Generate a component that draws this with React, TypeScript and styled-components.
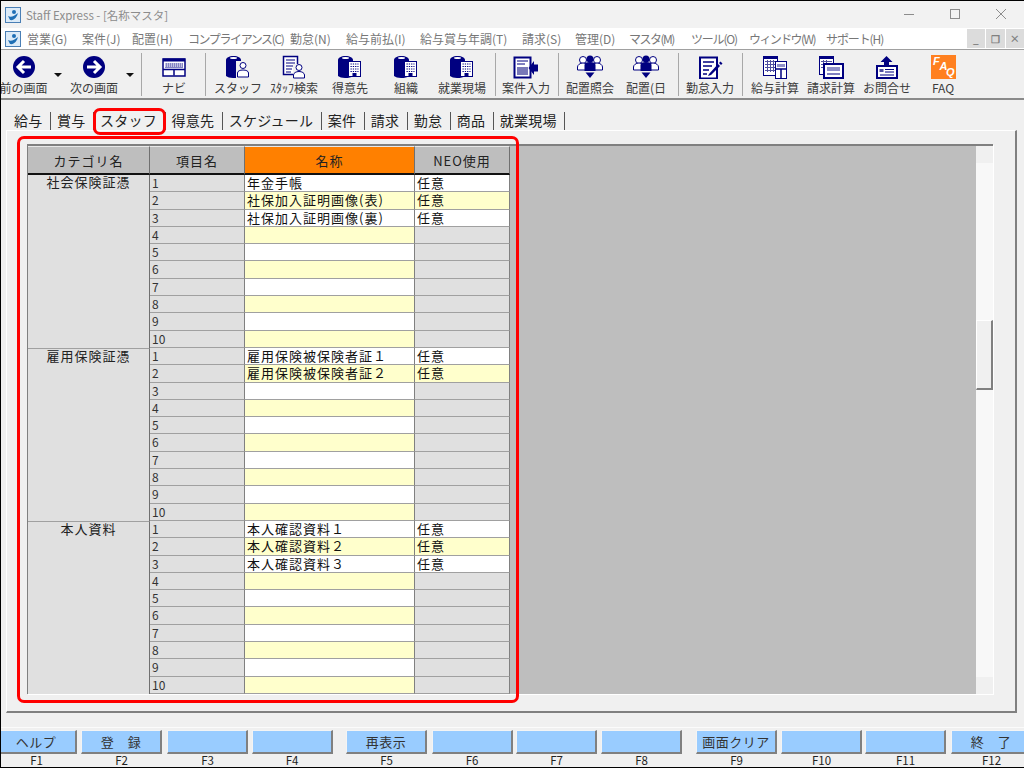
import React from "react";
import styled, { createGlobalStyle } from "styled-components";

const navy = "#000080";
const gothic = `"Noto Sans CJK JP", "Liberation Sans", sans-serif`;

const GlobalStyle = createGlobalStyle`
  html, body {
    margin: 0;
    padding: 0;
    background: #f0f0f0;
  }
  body {
    font-family: ${gothic};
    overflow: hidden;
  }
`;

const Binder = () => (
  <>
    <path d="M1 7c0-2 3-4 7.500-4S16 5 16 7v16c-2 1.500-4 2-8 2-3 0-5.500-.8-7-2z" fill={navy} />
    <ellipse cx="8.500" cy="5" rx="3.500" ry="1" fill="#fff" />
  </>
);

const PersonBadge = () => (
  <>
    <rect x="11" y="8" width="13" height="17" fill="#f0f0f0" />
    <circle cx="18" cy="12.500" r="3" fill="#fff" stroke={navy} />
    <path d="M12.500 24v-4c0-2 2.500-3 5.500-3s5.500 1 5.500 3v4z" fill="#fff" stroke={navy} />
  </>
);

const BuildingBadge = () => (
  <>
    <rect x="11.500" y="8.500" width="12" height="15" fill="#fff" stroke={navy} />
    <path d="M13.500 11h8M13.500 13.500h8M13.500 16h8M13.500 18.500h8" stroke={navy} strokeDasharray="1.300 1" />
    <rect x="15.500" y="20" width="4" height="3.500" fill={navy} />
  </>
);

const Crowd = () => (
  <>
    <circle cx="6" cy="7" r="3.500" fill="#fff" stroke={navy} />
    <circle cx="20" cy="7" r="3.500" fill="#fff" stroke={navy} />
    <path d="M.5 17v-3c0-2 2.500-4 5.500-4s5.500 2 5.500 4v3zM14.500 17v-3c0-2 2.500-4 5.500-4s5.500 2 5.500 4v3z" fill="#fff" stroke={navy} />
    <circle cx="13" cy="6" r="3.500" fill={navy} />
    <path d="M7.500 18v-6c0-2 2-3 5.500-3s5.500 1 5.500 3v6z" fill={navy} />
    <path d="M8.500 19.500h9L13 25z" fill={navy} />
  </>
);

const icons: Record<string, React.ReactNode> = {
  back: (
    <>
      <circle cx="13" cy="14" r="11" fill={navy} />
      <path d="M20 14H8M13 8l-6 6 6 6" fill="none" stroke="#fff" strokeWidth="3" />
    </>
  ),
  next: (
    <>
      <circle cx="13" cy="14" r="11" fill={navy} />
      <path d="M6 14h12M13 8l6 6-6 6" fill="none" stroke="#fff" strokeWidth="3" />
    </>
  ),
  navi: (
    <>
      <rect x="2" y="6" width="22" height="17" fill="#fff" stroke={navy} strokeWidth="1.500" />
      <rect x="2" y="5.500" width="22" height="3" fill={navy} />
      <rect x="4" y="10" width="18" height="5" fill="#8484c4" />
      <path d="M4 11h18M4 13h18" stroke="#fff" strokeDasharray="1 1" />
      <path d="M2 16.500h22M13 16.500v6" stroke={navy} strokeWidth="1.500" />
    </>
  ),
  staff: (
    <>
      <Binder />
      <PersonBadge />
    </>
  ),
  search: (
    <>
      <rect x="2.500" y="3.500" width="14" height="18" fill="#fff" stroke={navy} strokeWidth="1.500" />
      <path d="M5 7h9M5 10h9M5 13h9M5 16h6M5 19h5" stroke={navy} />
      <rect x="12" y="11" width="13" height="14" fill="#f0f0f0" />
      <circle cx="18" cy="14.500" r="3" fill="#fff" stroke={navy} />
      <path d="M12.500 25v-3c0-2 2.500-3.500 5.500-3.500s5.500 1.500 5.500 3.500v3z" fill="#fff" stroke={navy} />
    </>
  ),
  client: (
    <>
      <Binder />
      <BuildingBadge />
    </>
  ),
  entry: (
    <>
      <rect x="1.500" y="4.500" width="16" height="20" fill="#fff" stroke={navy} strokeWidth="2" />
      <path d="M4 8h11M4 11h8" stroke={navy} />
      <rect x="4" y="14" width="11" height="8" fill="#7878b8" />
      <path d="M25 11.500v7h-4v3.500l-5.500-7 5.500-7v3.500z" fill={navy} />
    </>
  ),
  place: <Crowd />,
  attend: (
    <>
      <path d="M3 4.500h17v21H3z" fill="#fff" stroke={navy} strokeWidth="2" />
      <path d="M6 9h11M6 13h9M6 17h6M6 21h4" stroke={navy} strokeWidth="1.500" />
      <path d="M12 21l9-10 2 2-9 9-3 1zM22 10l1.500-1.500 2 2L24 12z" fill={navy} />
    </>
  ),
  salary: (
    <>
      <rect x="1.500" y="3.500" width="14" height="19" fill="#fff" stroke={navy} />
      <rect x="1" y="3" width="15" height="3" fill={navy} />
      <path d="M3 8.500h11M3 11.500h11M3 14.500h11M3 17.500h11M5.500 7v12M8.500 7v12M11.500 7v12" stroke="#5050a0" />
      <rect x="13.500" y="8.500" width="11" height="17" fill="#fff" stroke={navy} />
      <rect x="15" y="11" width="8" height="3" fill="#8f8fc8" />
      <path d="M13 16h12M19 16v9" stroke={navy} strokeWidth="1.500" />
    </>
  ),
  invoice: (
    <>
      <rect x="1.500" y="3.500" width="14" height="18" fill="#fff" stroke={navy} />
      <rect x="1" y="3" width="15" height="3" fill={navy} />
      <path d="M3 8.500h11M3 11.500h11M3 14.500h11M5.500 7v10M8.500 7v10" stroke="#5050a0" />
      <rect x="6" y="11" width="19" height="14" fill="#fff" stroke={navy} strokeWidth="2" />
      <rect x="9" y="14" width="13" height="4" fill="#8f8fc8" />
      <path d="M9 21h13" stroke={navy} />
    </>
  ),
  contact: (
    <>
      <path d="M12.500 3l6 6h-3.500v3h-5V9H6.500z" fill={navy} />
      <rect x="3" y="13" width="20" height="12" fill="#fff" stroke={navy} strokeWidth="2" />
      <rect x="5.500" y="16" width="4" height="3" fill="#5050a0" />
      <path d="M11 16.500h9M11 19h9M6 22h14" stroke={navy} />
    </>
  ),
};

const Root = styled.div`
  position: relative;
  width: 1024px;
  height: 768px;
  overflow: hidden;
  box-sizing: border-box;
  border-top: 1px solid #000;
  border-left: 1px solid #000;
  border-bottom: 1px solid #000;
  background: #f0f0f0;
  display: flex;
  flex-direction: column;
`;

const TitleBar = styled.div`
  height: 27px;
  display: flex;
  align-items: center;
  background: #f2f2f2;
  flex-shrink: 0;
`;

const AppIcon = styled.svg<{ $inMenu?: boolean }>`
  width: 16px;
  height: 16px;
  margin-left: ${(p) => (p.$inMenu ? -1 : 4)}px;
  margin-right: ${(p) => (p.$inMenu ? 6 : 0)}px;
  flex-shrink: 0;
`;

const TitleText = styled.span`
  margin-left: 5px;
  font-size: 11.500px;
  color: #8c8c8c;
  flex: 1;
`;

const WindowButton = styled.svg`
  width: 46px;
  height: 14px;
  margin-bottom: 2px;
  fill: none;
  stroke: #8c8c8c;
  stroke-width: 1;
`;

const MenuBar = styled.div`
  height: 22px;
  box-sizing: border-box;
  display: flex;
  align-items: center;
  padding-left: 5px;
  background: #fff;
  border-bottom: 1px solid #a0a0a0;
  flex-shrink: 0;
`;

const MenuItem = styled.span<{ $width: number; $squeeze: number }>`
  width: ${(p) => p.$width}px;
  flex-shrink: 0;
  font-size: 12px;
  letter-spacing: ${(p) => p.$squeeze}px;
  color: #777;
  white-space: nowrap;
`;

const MdiButtons = styled.div`
  margin-left: auto;
  display: flex;
  gap: 1px;
`;

const MdiButton = styled.span`
  width: 18.500px;
  height: 19px;
  background: #dcdcdc;
  color: #808080;
  font-size: 10px;
  font-weight: 700;
  display: flex;
  align-items: center;
  justify-content: center;
`;

const Toolbar = styled.div`
  height: 48px;
  display: flex;
  background: #f0f0f0;
  border-bottom: 2px solid #8a8a8a;
  flex-shrink: 0;
`;

const ToolGroup = styled.div<{ $pad: number; $width: number; $last?: boolean }>`
  width: ${(p) => p.$width}px;
  box-sizing: border-box;
  padding-left: ${(p) => p.$pad}px;
  display: flex;
  margin: 3px 0 2px;
  border-right: ${(p) => (p.$last ? "none" : "1px solid #a8a8a8")};
  flex-shrink: 0;
`;

const Tool = styled.div<{ $width: number }>`
  width: ${(p) => p.$width}px;
  flex-shrink: 0;
  display: flex;
  flex-direction: column;
  align-items: center;
  white-space: nowrap;
`;

const ToolIcon = styled.svg`
  width: 26px;
  height: 26px;
  display: block;
  flex-shrink: 0;
`;

const ToolLabel = styled.span`
  margin-top: 2px;
  font-size: 12px;
  line-height: 14px;
  color: #3c3c3c;
`;

const Caret = styled.div`
  width: 0;
  height: 0;
  margin-top: 20px;
  border-left: 4px solid transparent;
  border-right: 4px solid transparent;
  border-top: 4px solid #111;
`;

const CaretSlot = styled.div<{ $width: number }>`
  width: ${(p) => p.$width}px;
  display: flex;
  justify-content: center;
  flex-shrink: 0;
`;

const FaqBadge = styled.svg`
  width: 25px;
  height: 24px;
  display: block;
  margin-top: 2px;
`;

const TabRow = styled.div`
  height: 22px;
  margin-top: 8px;
  padding-left: 7px;
  display: flex;
  flex-shrink: 0;
`;

const Tab = styled.div`
  padding: 0 7.500px 0 6px;
  border-right: 1px solid #555;
  margin-top: 4px;
  font-size: 14px;
  line-height: 17px;
  letter-spacing: 0.25px;
  color: #222;
  white-space: nowrap;
`;

const Panel = styled.div`
  width: 1011px;
  height: 583px;
  margin-left: 5px;
  box-sizing: border-box;
  padding: 13px 22px 17px 20px;
  background: #f0f0f0;
  border-top: 1px solid #fff;
  border-left: 1px solid #fff;
  border-right: 2px solid #808080;
  border-bottom: 2px solid #808080;
  flex-shrink: 0;
  display: flex;
`;

const GridArea = styled.div`
  flex: 1;
  display: flex;
  background: #bebebe;
  border-top: 2px solid #808080;
  box-shadow: 1px 1px 0 #fff;
`;

const Table = styled.div`
  width: 483px;
  display: grid;
  grid-template-columns: 122px 95px 170px 95px;
  grid-template-rows: 29px repeat(30, minmax(0, 1fr));
  border-left: 1px solid #808080;
`;

const HeadCell = styled.div<{ $active?: boolean }>`
  box-sizing: border-box;
  background: ${(p) => (p.$active ? "#ff8000" : "#bebebe")};
  border-top: 1px solid #e8e8e8;
  border-right: 1px solid #707070;
  border-bottom: 2px solid #111;
  display: flex;
  align-items: center;
  justify-content: center;
  font-size: 13px;
  letter-spacing: 1px;
  color: #222;
`;

const CategoryCell = styled.div`
  grid-row: span 10;
  box-sizing: border-box;
  background: #e0e0e0;
  border-right: 1px solid #707070;
  text-align: center;
  font-size: 13px;
  line-height: 13px;
  letter-spacing: 1px;
  color: #222;
  &:not(:nth-child(5)) {
    border-top: 1px solid #a0a0a0;
  }
`;

const tones = { white: "#fff", yellow: "#ffffcc", gray: "#e0e0e0" };

const Cell = styled.div<{ $tone: keyof typeof tones }>`
  box-sizing: border-box;
  min-height: 0;
  background: ${(p) => tones[p.$tone]};
  border-right: 1px solid #808080;
  border-bottom: 1px solid #a0a0a0;
  padding-left: 2px;
  font-size: 13px;
  line-height: 15px;
  letter-spacing: 1px;
  color: #111;
  white-space: nowrap;
`;

const NumberCell = styled(Cell)`
  letter-spacing: 0;
  color: #333;
  font-size: 12px;
`;

const Spacer = styled.div`
  flex: 1;
`;

const Scrollbar = styled.div`
  width: 17px;
  background: #f8f8f8;
  display: flex;
  flex-direction: column;
`;

const ScrollCap = styled.div`
  height: 17px;
  background: #f0f0f0;
`;

const ScrollTrack = styled.div<{ $size: number }>`
  height: ${(p) => p.$size}px;
`;

const ScrollThumb = styled.div`
  height: 70px;
  box-sizing: border-box;
  background: #f0f0f0;
  border-top: 1px solid #fff;
  border-left: 1px solid #fff;
  border-right: 2px solid #808080;
  border-bottom: 2px solid #808080;
`;

const FunctionBar = styled.div`
  margin-top: 14px;
  padding-top: 2px;
  border-top: 1px solid #fbfbfb;
  display: flex;
  gap: 3px;
  flex: 1;
  min-height: 0;
`;

const FKey = styled.div<{ $shift: number }>`
  width: 81px;
  flex-shrink: 0;
  margin-left: ${(p) => p.$shift}px;
  display: flex;
  flex-direction: column;
`;

const FButton = styled.div`
  height: 24px;
  box-sizing: border-box;
  background: #99ccff;
  border-top: 1px solid #f4f4f4;
  border-left: 1px solid #f4f4f4;
  border-right: 2px solid #808080;
  border-bottom: 2px solid #808080;
  display: flex;
  align-items: center;
  justify-content: center;
  font-size: 13px;
  letter-spacing: 0.5px;
  color: #333;
  white-space: pre;
`;

const FLabel = styled.span`
  text-align: center;
  font-size: 11.500px;
  line-height: 12px;
  color: #222;
`;

const Highlight = styled.div<{ $x: number; $y: number; $w: number; $h: number }>`
  position: absolute;
  left: ${(p) => p.$x}px;
  top: ${(p) => p.$y}px;
  width: ${(p) => p.$w}px;
  height: ${(p) => p.$h}px;
  box-sizing: border-box;
  border: 3px solid #ff0000;
  border-radius: 7px;
  pointer-events: none;
`;

const menus: [string, number, number][] = [
  ["営業(G)", 55, 0],
  ["案件(J)", 50, 0],
  ["配置(H)", 56, 0],
  ["コンプライアンス(C)", 102, -1.4],
  ["勤怠(N)", 56, 0],
  ["給与前払(I)", 74, 0],
  ["給与賞与年調(T)", 102, 0],
  ["請求(S)", 53, 0],
  ["管理(D)", 54, 0],
  ["マスタ(M)", 62, -1.5],
  ["ツール(O)", 58, -1.2],
  ["ウィンドウ(W)", 77, -1.6],
  ["サポート(H)", 60, -1.1],
];

const tabs = ["給与", "賞与", "スタッフ", "得意先", "スケジュール", "案件", "請求", "勤怠", "商品", "就業現場"];

const groups = [
  { name: "社会保険証憑", items: ["年金手帳", "社保加入証明画像(表)", "社保加入証明画像(裏)"] },
  { name: "雇用保険証憑", items: ["雇用保険被保険者証１", "雇用保険被保険者証２"] },
  { name: "本人資料", items: ["本人確認資料１", "本人確認資料２", "本人確認資料３"] },
];

const fkeys: [string, string, number][] = [
  ["ヘルプ", "F1", -5],
  ["登　録", "F2", 1],
  ["", "F3", 2],
  ["", "F4", 0.5],
  ["再表示", "F5", 10.5],
  ["", "F6", 1.5],
  ["", "F7", 0.5],
  ["", "F8", 1],
  ["画面クリア", "F9", 11],
  ["", "F10", 1],
  ["", "F11", 0],
  ["終　了", "F12", 2],
];

function ToolButton({ icon, label, width }: { icon: string; label: string; width: number }) {
  return (
    <Tool $width={width}>
      <ToolIcon viewBox="0 0 26 26">{icons[icon]}</ToolIcon>
      <ToolLabel>{label}</ToolLabel>
    </Tool>
  );
}

function SmallLogo({ inMenu }: { inMenu?: boolean }) {
  return (
    <AppIcon viewBox="0 0 16 16" $inMenu={inMenu}>
      <rect x="0.500" y="0.500" width="15" height="15" fill="#dcebf8" stroke="#4a7fb5" />
      <circle cx="9" cy="5" r="2" fill="#1f6fb5" />
      <path d="M3 9c3 2 6 0 10-3-1 4-4 8-8 7z" fill="#1f6fb5" />
    </AppIcon>
  );
}

function App() {
  return (
    <Root>
      <GlobalStyle />
      <TitleBar>
        <SmallLogo />
        <TitleText>Staff Express - [名称マスタ]</TitleText>
        <WindowButton viewBox="0 0 46 14">
          <path d="M18 7.500h10" />
        </WindowButton>
        <WindowButton viewBox="0 0 46 14">
          <rect x="18.500" y="2.500" width="9" height="9" />
        </WindowButton>
        <WindowButton viewBox="0 0 46 14">
          <path d="M18 2l10 10M28 2L18 12" />
        </WindowButton>
      </TitleBar>

      <MenuBar>
        <SmallLogo inMenu />
        {menus.map(([label, width, squeeze]) => (
          <MenuItem key={label} $width={width} $squeeze={squeeze}>
            {label}
          </MenuItem>
        ))}
        <MdiButtons>
          <MdiButton>_</MdiButton>
          <MdiButton>❐</MdiButton>
          <MdiButton>×</MdiButton>
        </MdiButtons>
      </MenuBar>

      <Toolbar>
        <ToolGroup $pad={0} $width={141}>
          <ToolButton icon="back" label="前の画面" width={45} />
          <CaretSlot $width={24}>
            <Caret />
          </CaretSlot>
          <ToolButton icon="next" label="次の画面" width={48} />
          <CaretSlot $width={23}>
            <Caret />
          </CaretSlot>
        </ToolGroup>
        <ToolGroup $pad={1} $width={64}>
          <ToolButton icon="navi" label="ナビ" width={62} />
        </ToolGroup>
        <ToolGroup $pad={4} $width={290}>
          <ToolButton icon="staff" label="スタッフ" width={56} />
          <ToolButton icon="search" label="ｽﾀｯﾌ検索" width={56} />
          <ToolButton icon="client" label="得意先" width={56} />
          <ToolButton icon="client" label="組織" width={56} />
          <ToolButton icon="client" label="就業現場" width={56} />
        </ToolGroup>
        <ToolGroup $pad={1} $width={63}>
          <ToolButton icon="entry" label="案件入力" width={58} />
        </ToolGroup>
        <ToolGroup $pad={3} $width={120}>
          <ToolButton icon="place" label="配置照会" width={56} />
          <ToolButton icon="place" label="配置(日" width={56} />
        </ToolGroup>
        <ToolGroup $pad={3} $width={64}>
          <ToolButton icon="attend" label="勤怠入力" width={56} />
        </ToolGroup>
        <ToolGroup $pad={4} $width={240} $last>
          <ToolButton icon="salary" label="給与計算" width={56} />
          <ToolButton icon="invoice" label="請求計算" width={56} />
          <ToolButton icon="contact" label="お問合せ" width={56} />
          <Tool $width={56}>
            <FaqBadge viewBox="0 0 25 24">
              <rect width="25" height="24" fill="#ff8020" />
              <text x="2" y="10" fontSize="11" fontWeight="700" fontStyle="italic" fill="#fff" fontFamily="Liberation Sans">F</text>
              <text x="8.500" y="15" fontSize="11" fontWeight="700" fontStyle="italic" fill="#fff" fontFamily="Liberation Sans">A</text>
              <text x="15" y="21" fontSize="11" fontWeight="700" fontStyle="italic" fill="#fff" fontFamily="Liberation Sans">Q</text>
            </FaqBadge>
            <ToolLabel>FAQ</ToolLabel>
          </Tool>
        </ToolGroup>
      </Toolbar>

      <TabRow>
        {tabs.map((t) => (
          <Tab key={t}>{t}</Tab>
        ))}
      </TabRow>

      <Panel>
        <GridArea>
          <Table>
            <HeadCell>カテゴリ名</HeadCell>
            <HeadCell>項目名</HeadCell>
            <HeadCell $active>名称</HeadCell>
            <HeadCell>NEO使用</HeadCell>
            {groups.map((g) => (
              <React.Fragment key={g.name}>
                <CategoryCell>{g.name}</CategoryCell>
                {Array.from({ length: 10 }, (_, i) => {
                  const name = g.items[i];
                  const tone = i % 2 === 0 ? "white" : "yellow";
                  return (
                    <React.Fragment key={i}>
                      <NumberCell $tone="gray">{i + 1}</NumberCell>
                      <Cell $tone={tone}>{name}</Cell>
                      <Cell $tone={name ? tone : "gray"}>{name ? "任意" : ""}</Cell>
                    </React.Fragment>
                  );
                })}
              </React.Fragment>
            ))}
          </Table>
          <Spacer />
          <Scrollbar>
            <ScrollCap />
            <ScrollTrack $size={157} />
            <ScrollThumb />
            <ScrollTrack $size={287} />
            <ScrollCap />
          </Scrollbar>
        </GridArea>
      </Panel>

      <FunctionBar>
        {fkeys.map(([label, key, shift]) => (
          <FKey key={key} $shift={shift}>
            <FButton>{label}</FButton>
            <FLabel>{key}</FLabel>
          </FKey>
        ))}
      </FunctionBar>

      <Highlight $x={92} $y={107} $w={73} $h={27} />
      <Highlight $x={16} $y={135} $w={502} $h={567} />
    </Root>
  );
}

export default App;
